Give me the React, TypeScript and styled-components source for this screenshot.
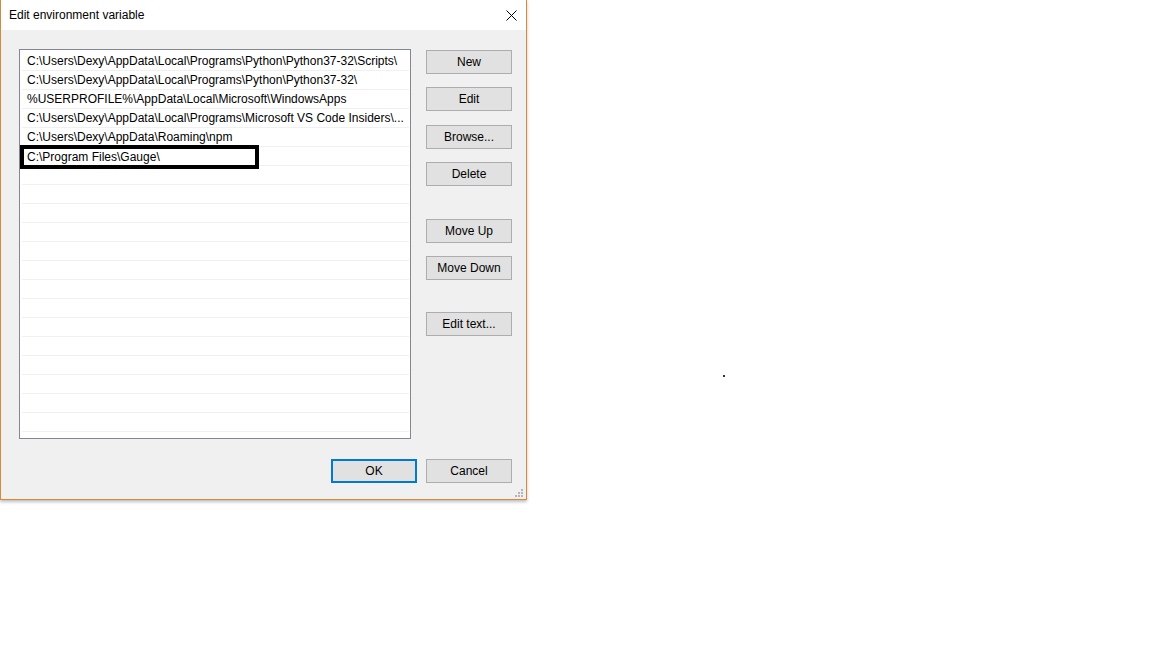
import React from 'react';
import styled, { createGlobalStyle } from 'styled-components';

const GlobalStyle = createGlobalStyle`
  html, body {
    margin: 0;
    padding: 0;
    background: #ffffff;
  }
  body {
    width: 1152px;
    height: 648px;
    overflow: hidden;
    position: relative;
    font-family: "Liberation Sans", Arial, sans-serif;
    font-size: 12px;
    color: #000000;
  }
`;

const Window = styled.div`
  width: 525px;
  border: 1px solid #d6893a;
  border-top: none;
  box-shadow: 0 2px 3px rgba(0, 0, 0, 0.25);
  display: flex;
  flex-direction: column;
`;

const TitleBar = styled.div`
  height: 30px;
  background: #ffffff;
  display: flex;
  align-items: center;
  justify-content: space-between;
  padding: 0 9px 0 8px;
`;

const Title = styled.span`
  font-size: 12px;
  line-height: 14px;
`;

const CloseIcon = styled.svg`
  width: 11px;
  height: 11px;
  display: block;
`;

const Body = styled.div`
  position: relative;
  background: #f0f0f0;
  padding: 19px 14px 16px 18px;
  display: flex;
  flex-direction: column;
`;

const Main = styled.div`
  display: flex;
  align-items: flex-start;
`;

const List = styled.div`
  width: 390px;
  height: 386px;
  border: 1px solid #828790;
  background: #ffffff;
  padding-top: 2px;
  box-sizing: content-box;
  overflow: hidden;
  display: flex;
  flex-direction: column;
`;

const Row = styled.div`
  position: relative;
  flex: 0 0 18px;
  height: 18px;
  margin: 0 1px 0 2px;
  border-bottom: 1px solid #f0f0f0;
  display: flex;
  align-items: center;
  padding-left: 5px;
  white-space: nowrap;
  line-height: 18px;
`;

const EditBox = styled.div`
  position: absolute;
  left: -2px;
  top: -2px;
  width: 228px;
  height: 16px;
  border: 4px solid #000000;
  background: #ffffff;
  display: flex;
  align-items: center;
  padding-left: 3px;
`;

const ButtonColumn = styled.div`
  margin-left: 15px;
  display: flex;
  flex-direction: column;
  padding-top: 1px;
`;

const Button = styled.div<{ $gap?: number; $default?: boolean }>`
  width: ${p => (p.$default ? 82 : 84)}px;
  height: ${p => (p.$default ? 20 : 22)}px;
  margin-top: ${p => p.$gap ?? 0}px;
  background: #e1e1e1;
  border: ${p => (p.$default ? '2px solid #0078d7' : '1px solid #adadad')};
  display: flex;
  align-items: center;
  justify-content: center;
  font-size: 12px;
`;

const Footer = styled.div`
  margin-top: 20px;
  display: flex;
  justify-content: flex-end;
  gap: 9px;
`;

const Grip = styled.svg`
  position: absolute;
  right: 2px;
  bottom: 1px;
  width: 10px;
  height: 10px;
`;

const Speck = styled.div`
  position: absolute;
  left: 723px;
  top: 375px;
  width: 2px;
  height: 2px;
  background: #333333;
`;

const paths = [
  'C:\\Users\\Dexy\\AppData\\Local\\Programs\\Python\\Python37-32\\Scripts\\',
  'C:\\Users\\Dexy\\AppData\\Local\\Programs\\Python\\Python37-32\\',
  '%USERPROFILE%\\AppData\\Local\\Microsoft\\WindowsApps',
  'C:\\Users\\Dexy\\AppData\\Local\\Programs\\Microsoft VS Code Insiders\\...',
  'C:\\Users\\Dexy\\AppData\\Roaming\\npm',
];

const sideButtons = [
  { label: 'New', gap: 0 },
  { label: 'Edit', gap: 13 },
  { label: 'Browse...', gap: 14 },
  { label: 'Delete', gap: 13 },
  { label: 'Move Up', gap: 33 },
  { label: 'Move Down', gap: 13 },
  { label: 'Edit text...', gap: 32 },
];

export default function App() {
  const rows = Array.from({ length: 21 }, (_, i) => i);
  return (
    <>
      <GlobalStyle />
      <Window>
        <TitleBar>
          <Title>Edit environment variable</Title>
          <CloseIcon viewBox="0 0 11 11">
            <path d="M0.5 0.5 L10.5 10.5 M10.5 0.5 L0.5 10.5" stroke="#000" strokeWidth="1" fill="none" />
          </CloseIcon>
        </TitleBar>
        <Body>
          <Main>
            <List>
              {rows.map(i => (
                <Row key={i}>
                  {i < paths.length && paths[i]}
                  {i === paths.length && <EditBox>C:\Program Files\Gauge\</EditBox>}
                </Row>
              ))}
            </List>
            <ButtonColumn>
              {sideButtons.map(b => (
                <Button key={b.label} $gap={b.gap}>
                  {b.label}
                </Button>
              ))}
            </ButtonColumn>
          </Main>
          <Footer>
            <Button $default>OK</Button>
            <Button>Cancel</Button>
          </Footer>
          <Grip viewBox="0 0 10 10">
            <g fill="#b4b4b4">
              <rect x="7" y="1" width="2" height="2" />
              <rect x="4" y="4" width="2" height="2" />
              <rect x="7" y="4" width="2" height="2" />
              <rect x="1" y="7" width="2" height="2" />
              <rect x="4" y="7" width="2" height="2" />
              <rect x="7" y="7" width="2" height="2" />
            </g>
          </Grip>
        </Body>
      </Window>
      <Speck />
    </>
  );
}
